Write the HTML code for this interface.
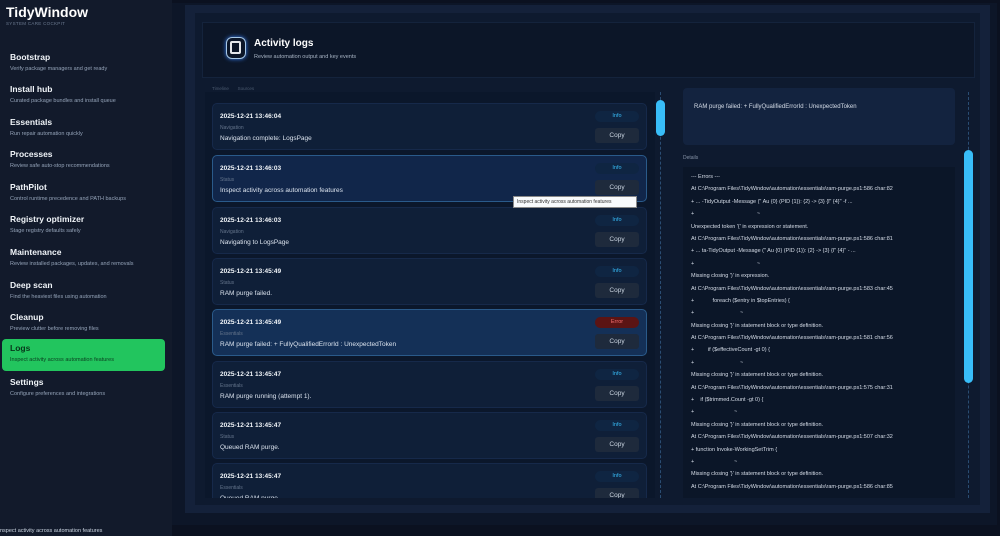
<!DOCTYPE html>
<html><head><meta charset="utf-8"><style>
*{box-sizing:border-box;margin:0;padding:0}
body{width:1000px;height:536px;overflow:hidden;background:#0b1120;font-family:"Liberation Sans",sans-serif;color:#e5e7eb;position:relative}
.a{position:absolute}
.side{left:0;top:0;width:172px;height:536px;background:#121a2b}
.nav{position:absolute;left:2px;width:163px;height:32px;padding:4px 8px}
.nav b{display:block;font-size:8.5px;color:#f1f5f9;font-weight:bold}
.nav span{display:block;font-size:5.5px;color:#94a3b8;margin-top:4px}
.card{position:absolute;left:212px;width:435px;height:47px;background:#0f1f38;border:1px solid #16294a;border-radius:5px}
.card .t{position:absolute;left:7px;top:9px;font-size:6.5px;font-weight:bold;color:#f1f5f9}
.card .c{position:absolute;left:7px;top:21px;font-size:5px;color:#64748b}
.card .m{position:absolute;left:7px;top:31px;font-size:6.5px;color:#dbe3ee}
.card .i{position:absolute;left:382px;top:7px;width:44px;height:11px;border-radius:6px;background:#0f2542;color:#38bdf8;font-size:5.5px;text-align:center;line-height:11px}
.card .p{position:absolute;left:382px;top:24px;width:44px;height:15px;border-radius:3px;background:#1e2a3c;color:#cbd5e1;font-size:6.5px;text-align:center;line-height:15px}
.sel{background:#143057;border-color:#2a5a8a}
.det div{font-size:5.5px;color:#d6dde8;height:12.4px;white-space:nowrap}
</style></head><body>
<div class="a side">
<div class="a" style="left:6px;top:4px;font-size:14px;font-weight:bold;color:#fff">TidyWindow</div>
<div class="a" style="left:6px;top:21px;font-size:4.5px;color:#6b7a90;letter-spacing:.3px">SYSTEM CARE COCKPIT</div>
<div class="nav" style="top:48px"><b>Bootstrap</b><span>Verify package managers and get ready</span></div>
<div class="nav" style="top:80px"><b>Install hub</b><span>Curated package bundles and install queue</span></div>
<div class="nav" style="top:113px"><b>Essentials</b><span>Run repair automation quickly</span></div>
<div class="nav" style="top:145px"><b>Processes</b><span>Review safe auto-stop recommendations</span></div>
<div class="nav" style="top:178px"><b>PathPilot</b><span>Control runtime precedence and PATH backups</span></div>
<div class="nav" style="top:210px"><b>Registry optimizer</b><span>Stage registry defaults safely</span></div>
<div class="nav" style="top:243px"><b>Maintenance</b><span>Review installed packages, updates, and removals</span></div>
<div class="nav" style="top:276px"><b>Deep scan</b><span>Find the heaviest files using automation</span></div>
<div class="nav" style="top:308px"><b>Cleanup</b><span>Preview clutter before removing files</span></div>
<div class="nav" style="top:339px;background:#22c55e;border-radius:4px"><b style="color:#08361a">Logs</b><span style="color:#0b3d1f">Inspect activity across automation features</span></div>
<div class="nav" style="top:373px"><b>Settings</b><span>Configure preferences and integrations</span></div>
</div>
<div class="a" style="left:0;top:528px;font-size:5.5px;color:#cbd5e1">nspect activity across automation features</div>
<div class="a" style="left:172px;top:3px;width:825px;height:522px;background:#0d1628"></div>
<div class="a" style="left:185px;top:5px;width:805px;height:508px;background:#14213a"></div>
<div class="a" style="left:195px;top:13px;width:785px;height:492px;background:#0e1a2f"></div>
<div class="a" style="left:202px;top:22px;width:773px;height:56px;background:#0c1628;border:1px solid #14233c"></div>
<div class="a" style="left:226px;top:37px;width:20px;height:22px;border:1.5px solid #a7c7e6;border-radius:6px;box-shadow:0 0 4px #3b82f6"><div style="margin:3px 3px;width:11px;height:13px;border:2px solid #e5e7eb;border-radius:2px"></div></div>
<div class="a" style="left:254px;top:38px;font-size:10px;font-weight:bold;color:#fff">Activity logs</div>
<div class="a" style="left:254px;top:54px;font-size:5.5px;color:#a8b4c4">Review automation output and key events</div>
<div class="a" style="left:205px;top:92px;width:450px;height:406px;background:#0b172b"></div>
<div class="a" style="left:212px;top:86px;font-size:4.5px;color:#4b5a70">Timeline &nbsp;&nbsp;&nbsp;&nbsp;&nbsp; Sources</div>
<div class="a" style="left:205px;top:92px;width:450px;height:406px;overflow:hidden">
<div style="position:relative;left:-205px;top:-92px">
<div class="card" style="top:103px"><div class="t">2025-12-21 13:46:04</div><div class="c">Navigation</div><div class="m">Navigation complete: LogsPage</div><div class="i">Info</div><div class="p">Copy</div></div>
<div class="card sel" style="top:155px;background:#11264a"><div class="t">2025-12-21 13:46:03</div><div class="c">Status</div><div class="m">Inspect activity across automation features</div><div class="i">Info</div><div class="p">Copy</div></div>
<div class="card" style="top:207px"><div class="t">2025-12-21 13:46:03</div><div class="c">Navigation</div><div class="m">Navigating to LogsPage</div><div class="i">Info</div><div class="p">Copy</div></div>
<div class="card" style="top:258px"><div class="t">2025-12-21 13:45:49</div><div class="c">Status</div><div class="m">RAM purge failed.</div><div class="i">Info</div><div class="p">Copy</div></div>
<div class="card sel" style="top:309px"><div class="t">2025-12-21 13:45:49</div><div class="c">Essentials</div><div class="m">RAM purge failed: + FullyQualifiedErrorId : UnexpectedToken</div><div class="i" style="background:#5b1414;color:#f87171">Error</div><div class="p">Copy</div></div>
<div class="card" style="top:361px"><div class="t">2025-12-21 13:45:47</div><div class="c">Essentials</div><div class="m">RAM purge running (attempt 1).</div><div class="i">Info</div><div class="p">Copy</div></div>
<div class="card" style="top:412px"><div class="t">2025-12-21 13:45:47</div><div class="c">Status</div><div class="m">Queued RAM purge.</div><div class="i">Info</div><div class="p">Copy</div></div>
<div class="card" style="top:463px"><div class="t">2025-12-21 13:45:47</div><div class="c">Essentials</div><div class="m">Queued RAM purge.</div><div class="i">Info</div><div class="p">Copy</div></div>
</div></div>
<div class="a" style="left:660px;top:92px;width:1px;height:406px;border-left:1px dashed #2a4d73"></div>
<div class="a" style="left:656px;top:100px;width:9px;height:36px;background:#38bdf8;border-radius:5px"></div>
<div class="a" style="left:513px;top:196px;width:124px;height:12px;background:#f8fafc;border:1px solid #888;font-size:5px;color:#333;line-height:10px;padding-left:3px">Inspect activity across automation features</div>
<div class="a" style="left:683px;top:88px;width:272px;height:57px;background:#13233f;border-radius:4px"></div>
<div class="a" style="left:694px;top:104px;font-size:6px;color:#d6dde8">RAM purge failed: + FullyQualifiedErrorId : UnexpectedToken</div>
<div class="a" style="left:683px;top:155px;font-size:5px;color:#8592a6">Details</div>
<div class="a det" style="left:683px;top:167px;width:272px;height:331px;background:#0b1628;padding:7px 8px;overflow:hidden">
<div>--- Errors ---</div>
<div>At C:\Program Files\TidyWindow\automation\essentials\ram-purge.ps1:586 char:82</div>
<div>+ ... -TidyOutput -Message ("    Au {0} (PID {1}): {2} -&gt; {3} {l" {4}" -f ...</div>
<div>+ &nbsp;&nbsp;&nbsp;&nbsp;&nbsp;&nbsp;&nbsp;&nbsp;&nbsp;&nbsp;&nbsp;&nbsp;&nbsp;&nbsp;&nbsp;&nbsp;&nbsp;&nbsp;&nbsp;&nbsp;&nbsp;&nbsp;&nbsp;&nbsp;&nbsp;&nbsp;&nbsp;&nbsp;&nbsp;&nbsp;&nbsp;&nbsp;&nbsp;&nbsp;&nbsp;&nbsp;&nbsp;&nbsp;&nbsp;&nbsp;~</div>
<div>Unexpected token '{' in expression or statement.</div>
<div>At C:\Program Files\TidyWindow\automation\essentials\ram-purge.ps1:586 char:81</div>
<div>+ ... ta-TidyOutput -Message ("    Au {0} (PID {1}): {2} -&gt; {3} {l" {4}" - ...</div>
<div>+ &nbsp;&nbsp;&nbsp;&nbsp;&nbsp;&nbsp;&nbsp;&nbsp;&nbsp;&nbsp;&nbsp;&nbsp;&nbsp;&nbsp;&nbsp;&nbsp;&nbsp;&nbsp;&nbsp;&nbsp;&nbsp;&nbsp;&nbsp;&nbsp;&nbsp;&nbsp;&nbsp;&nbsp;&nbsp;&nbsp;&nbsp;&nbsp;&nbsp;&nbsp;&nbsp;&nbsp;&nbsp;&nbsp;&nbsp;&nbsp;~</div>
<div>Missing closing ')' in expression.</div>
<div>At C:\Program Files\TidyWindow\automation\essentials\ram-purge.ps1:583 char:45</div>
<div>+ &nbsp;&nbsp;&nbsp;&nbsp;&nbsp;&nbsp;&nbsp;&nbsp;&nbsp;&nbsp;&nbsp;foreach ($entry in $topEntries) {</div>
<div>+ &nbsp;&nbsp;&nbsp;&nbsp;&nbsp;&nbsp;&nbsp;&nbsp;&nbsp;&nbsp;&nbsp;&nbsp;&nbsp;&nbsp;&nbsp;&nbsp;&nbsp;&nbsp;&nbsp;&nbsp;&nbsp;&nbsp;&nbsp;&nbsp;&nbsp;&nbsp;&nbsp;&nbsp;&nbsp;~</div>
<div>Missing closing '}' in statement block or type definition.</div>
<div>At C:\Program Files\TidyWindow\automation\essentials\ram-purge.ps1:581 char:56</div>
<div>+ &nbsp;&nbsp;&nbsp;&nbsp;&nbsp;&nbsp;&nbsp;&nbsp;if ($effectiveCount -gt 0) {</div>
<div>+ &nbsp;&nbsp;&nbsp;&nbsp;&nbsp;&nbsp;&nbsp;&nbsp;&nbsp;&nbsp;&nbsp;&nbsp;&nbsp;&nbsp;&nbsp;&nbsp;&nbsp;&nbsp;&nbsp;&nbsp;&nbsp;&nbsp;&nbsp;&nbsp;&nbsp;&nbsp;&nbsp;&nbsp;&nbsp;~</div>
<div>Missing closing '}' in statement block or type definition.</div>
<div>At C:\Program Files\TidyWindow\automation\essentials\ram-purge.ps1:575 char:31</div>
<div>+ &nbsp;&nbsp;&nbsp;if ($trimmed.Count -gt 0) {</div>
<div>+ &nbsp;&nbsp;&nbsp;&nbsp;&nbsp;&nbsp;&nbsp;&nbsp;&nbsp;&nbsp;&nbsp;&nbsp;&nbsp;&nbsp;&nbsp;&nbsp;&nbsp;&nbsp;&nbsp;&nbsp;&nbsp;&nbsp;&nbsp;&nbsp;&nbsp;~</div>
<div>Missing closing '}' in statement block or type definition.</div>
<div>At C:\Program Files\TidyWindow\automation\essentials\ram-purge.ps1:507 char:32</div>
<div>+ function Invoke-WorkingSetTrim {</div>
<div>+ &nbsp;&nbsp;&nbsp;&nbsp;&nbsp;&nbsp;&nbsp;&nbsp;&nbsp;&nbsp;&nbsp;&nbsp;&nbsp;&nbsp;&nbsp;&nbsp;&nbsp;&nbsp;&nbsp;&nbsp;&nbsp;&nbsp;&nbsp;&nbsp;&nbsp;~</div>
<div>Missing closing '}' in statement block or type definition.</div>
<div>At C:\Program Files\TidyWindow\automation\essentials\ram-purge.ps1:586 char:85</div>
</div>
<div class="a" style="left:968px;top:92px;width:1px;height:406px;border-left:1px dashed #2a4d73"></div>
<div class="a" style="left:964px;top:150px;width:9px;height:233px;background:#38bdf8;border-radius:5px"></div>
</body></html>
